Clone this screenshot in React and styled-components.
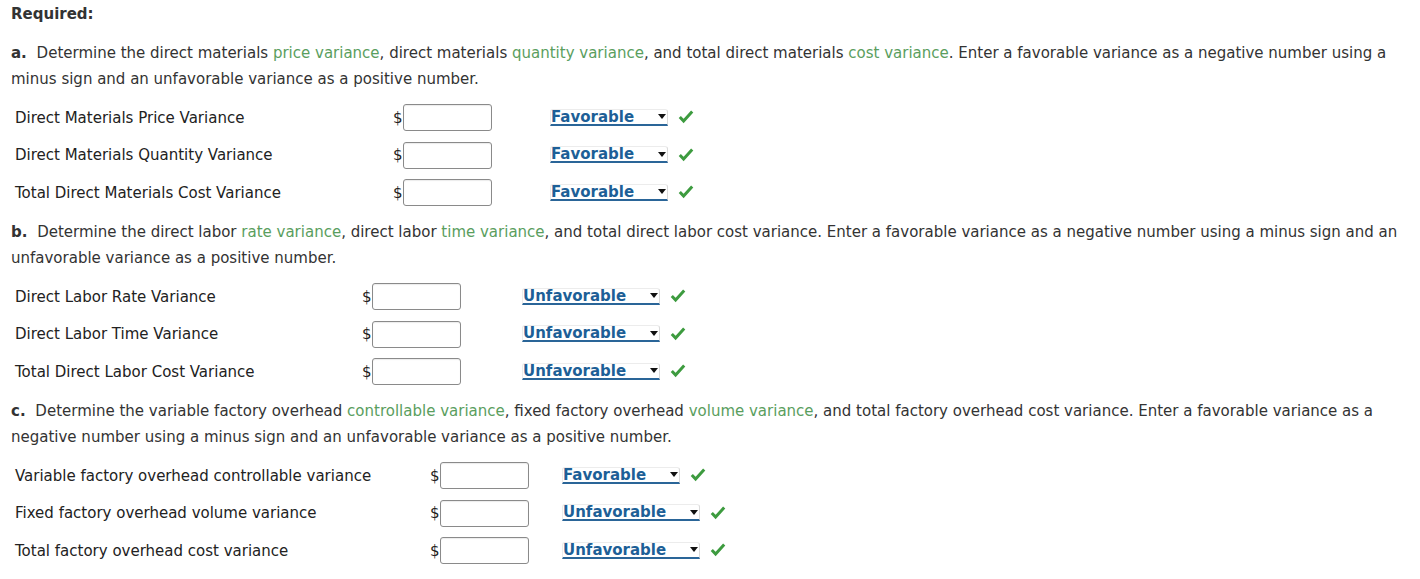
import React from 'react';
import styled, {createGlobalStyle} from 'styled-components';

const Global = createGlobalStyle`
    html, body {
        margin: 0;
        padding: 0;
        background: #ffffff;
    }
    body {
        font-family: "DejaVu Sans", Verdana, sans-serif;
        font-size: 15px;
        color: #333333;
    }
`;

const Page = styled.div`
    padding: 1px 11px 0;
    width: 1398px;
`;

const Heading = styled.div`
    font-weight: bold;
    line-height: 26px;
    margin-bottom: 13px;
`;

const Para = styled.p`
    margin: 0;
    line-height: 26px;
`;

const Letter = styled.b`
    margin-right: 5px;
`;

const Green = styled.span`
    color: #5a9e5e;
`;

const Table = styled.div`
    padding: 7px 0 7.5px;
    display: flex;
    flex-direction: column;
`;

const Row = styled.div`
    height: 37.5px;
    display: flex;
    align-items: center;
    color: #222222;
`;

const Label = styled.div`
    width: ${p => p.w}px;
    padding-left: 4px;
    box-sizing: border-box;
    flex-shrink: 0;
`;

const Dollar = styled.span`
    width: 10px;
    display: inline-block;
`;

const Input = styled.div`
    width: 89px;
    height: 27px;
    box-sizing: border-box;
    border: 1px solid #8a8a8a;
    border-radius: 3px;
    background: #fff;
    box-shadow: inset 0 1px 1px rgba(0, 0, 0, 0.08);
`;

const Select = styled.div`
    margin-left: ${p => p.gap}px;
    width: ${p => p.w}px;
    height: 17px;
    margin-top: -1px;
    box-sizing: border-box;
    border: 1px solid #ececec;
    border-right-color: #dadada;
    border-bottom: 2px solid #2a6598;
    border-radius: 3px 3px 0 0;
    background: #fff;
    display: flex;
    align-items: center;
    justify-content: space-between;
    font-weight: bold;
    font-size: 15px;
    color: #1d5f97;
    line-height: 14px;
`;

const Arrow = styled.span`
    width: 0;
    height: 0;
    margin-right: 1px;
    border-left: 4.5px solid transparent;
    border-right: 4.5px solid transparent;
    border-top: 5px solid #111;
`;

const Check = styled.svg`
    margin-left: 10px;
    margin-top: -1px;
`;

const CheckMark = () => (
    <Check width="16" height="14" viewBox="0 0 16 14">
        <polyline points="1.8,7 5.6,11 14.2,1.6" fill="none" stroke="#3d9b3f" strokeWidth="3"/>
    </Check>
);

const VarRow = ({label, labelW, gap, value}) => (
    <Row>
        <Label w={labelW}>{label}</Label>
        <Dollar>$</Dollar>
        <Input/>
        <Select gap={gap} w={value === 'Favorable' ? 118 : 138}>
            <span>{value}</span>
            <Arrow/>
        </Select>
        <CheckMark/>
    </Row>
);

const sections = [
    {
        labelW: 382, gap: 58,
        rows: [
            ['Direct Materials Price Variance', 'Favorable'],
            ['Direct Materials Quantity Variance', 'Favorable'],
            ['Total Direct Materials Cost Variance', 'Favorable'],
        ],
    },
    {
        labelW: 351, gap: 61,
        rows: [
            ['Direct Labor Rate Variance', 'Unfavorable'],
            ['Direct Labor Time Variance', 'Unfavorable'],
            ['Total Direct Labor Cost Variance', 'Unfavorable'],
        ],
    },
    {
        labelW: 419, gap: 33,
        rows: [
            ['Variable factory overhead controllable variance', 'Favorable'],
            ['Fixed factory overhead volume variance', 'Unfavorable'],
            ['Total factory overhead cost variance', 'Unfavorable'],
        ],
    },
];

const Section = ({s}) => (
    <Table>
        {s.rows.map(r => (
            <VarRow key={r[0]} label={r[0]} value={r[1]} labelW={s.labelW} gap={s.gap}/>
        ))}
    </Table>
);

export default function App() {
    return (
        <Page>
            <Global/>
            <Heading>Required:</Heading>
            <Para>
                <Letter>a.</Letter> Determine the direct materials <Green>price variance</Green>, direct materials <Green>quantity variance</Green>, and total direct materials <Green>cost variance</Green>. Enter a favorable variance as a negative number using a minus sign and an unfavorable variance as a positive number.
            </Para>
            <Section s={sections[0]}/>
            <Para>
                <Letter>b.</Letter> Determine the direct labor <Green>rate variance</Green>, direct labor <Green>time variance</Green>, and total direct labor cost variance. Enter a favorable variance as a negative number using a minus sign and an unfavorable variance as a positive number.
            </Para>
            <Section s={sections[1]}/>
            <Para>
                <Letter>c.</Letter> Determine the variable factory overhead <Green>controllable variance</Green>, fixed factory overhead <Green>volume variance</Green>, and total factory overhead cost variance. Enter a favorable variance as a negative number using a minus sign and an unfavorable variance as a positive number.
            </Para>
            <Section s={sections[2]}/>
        </Page>
    );
}
